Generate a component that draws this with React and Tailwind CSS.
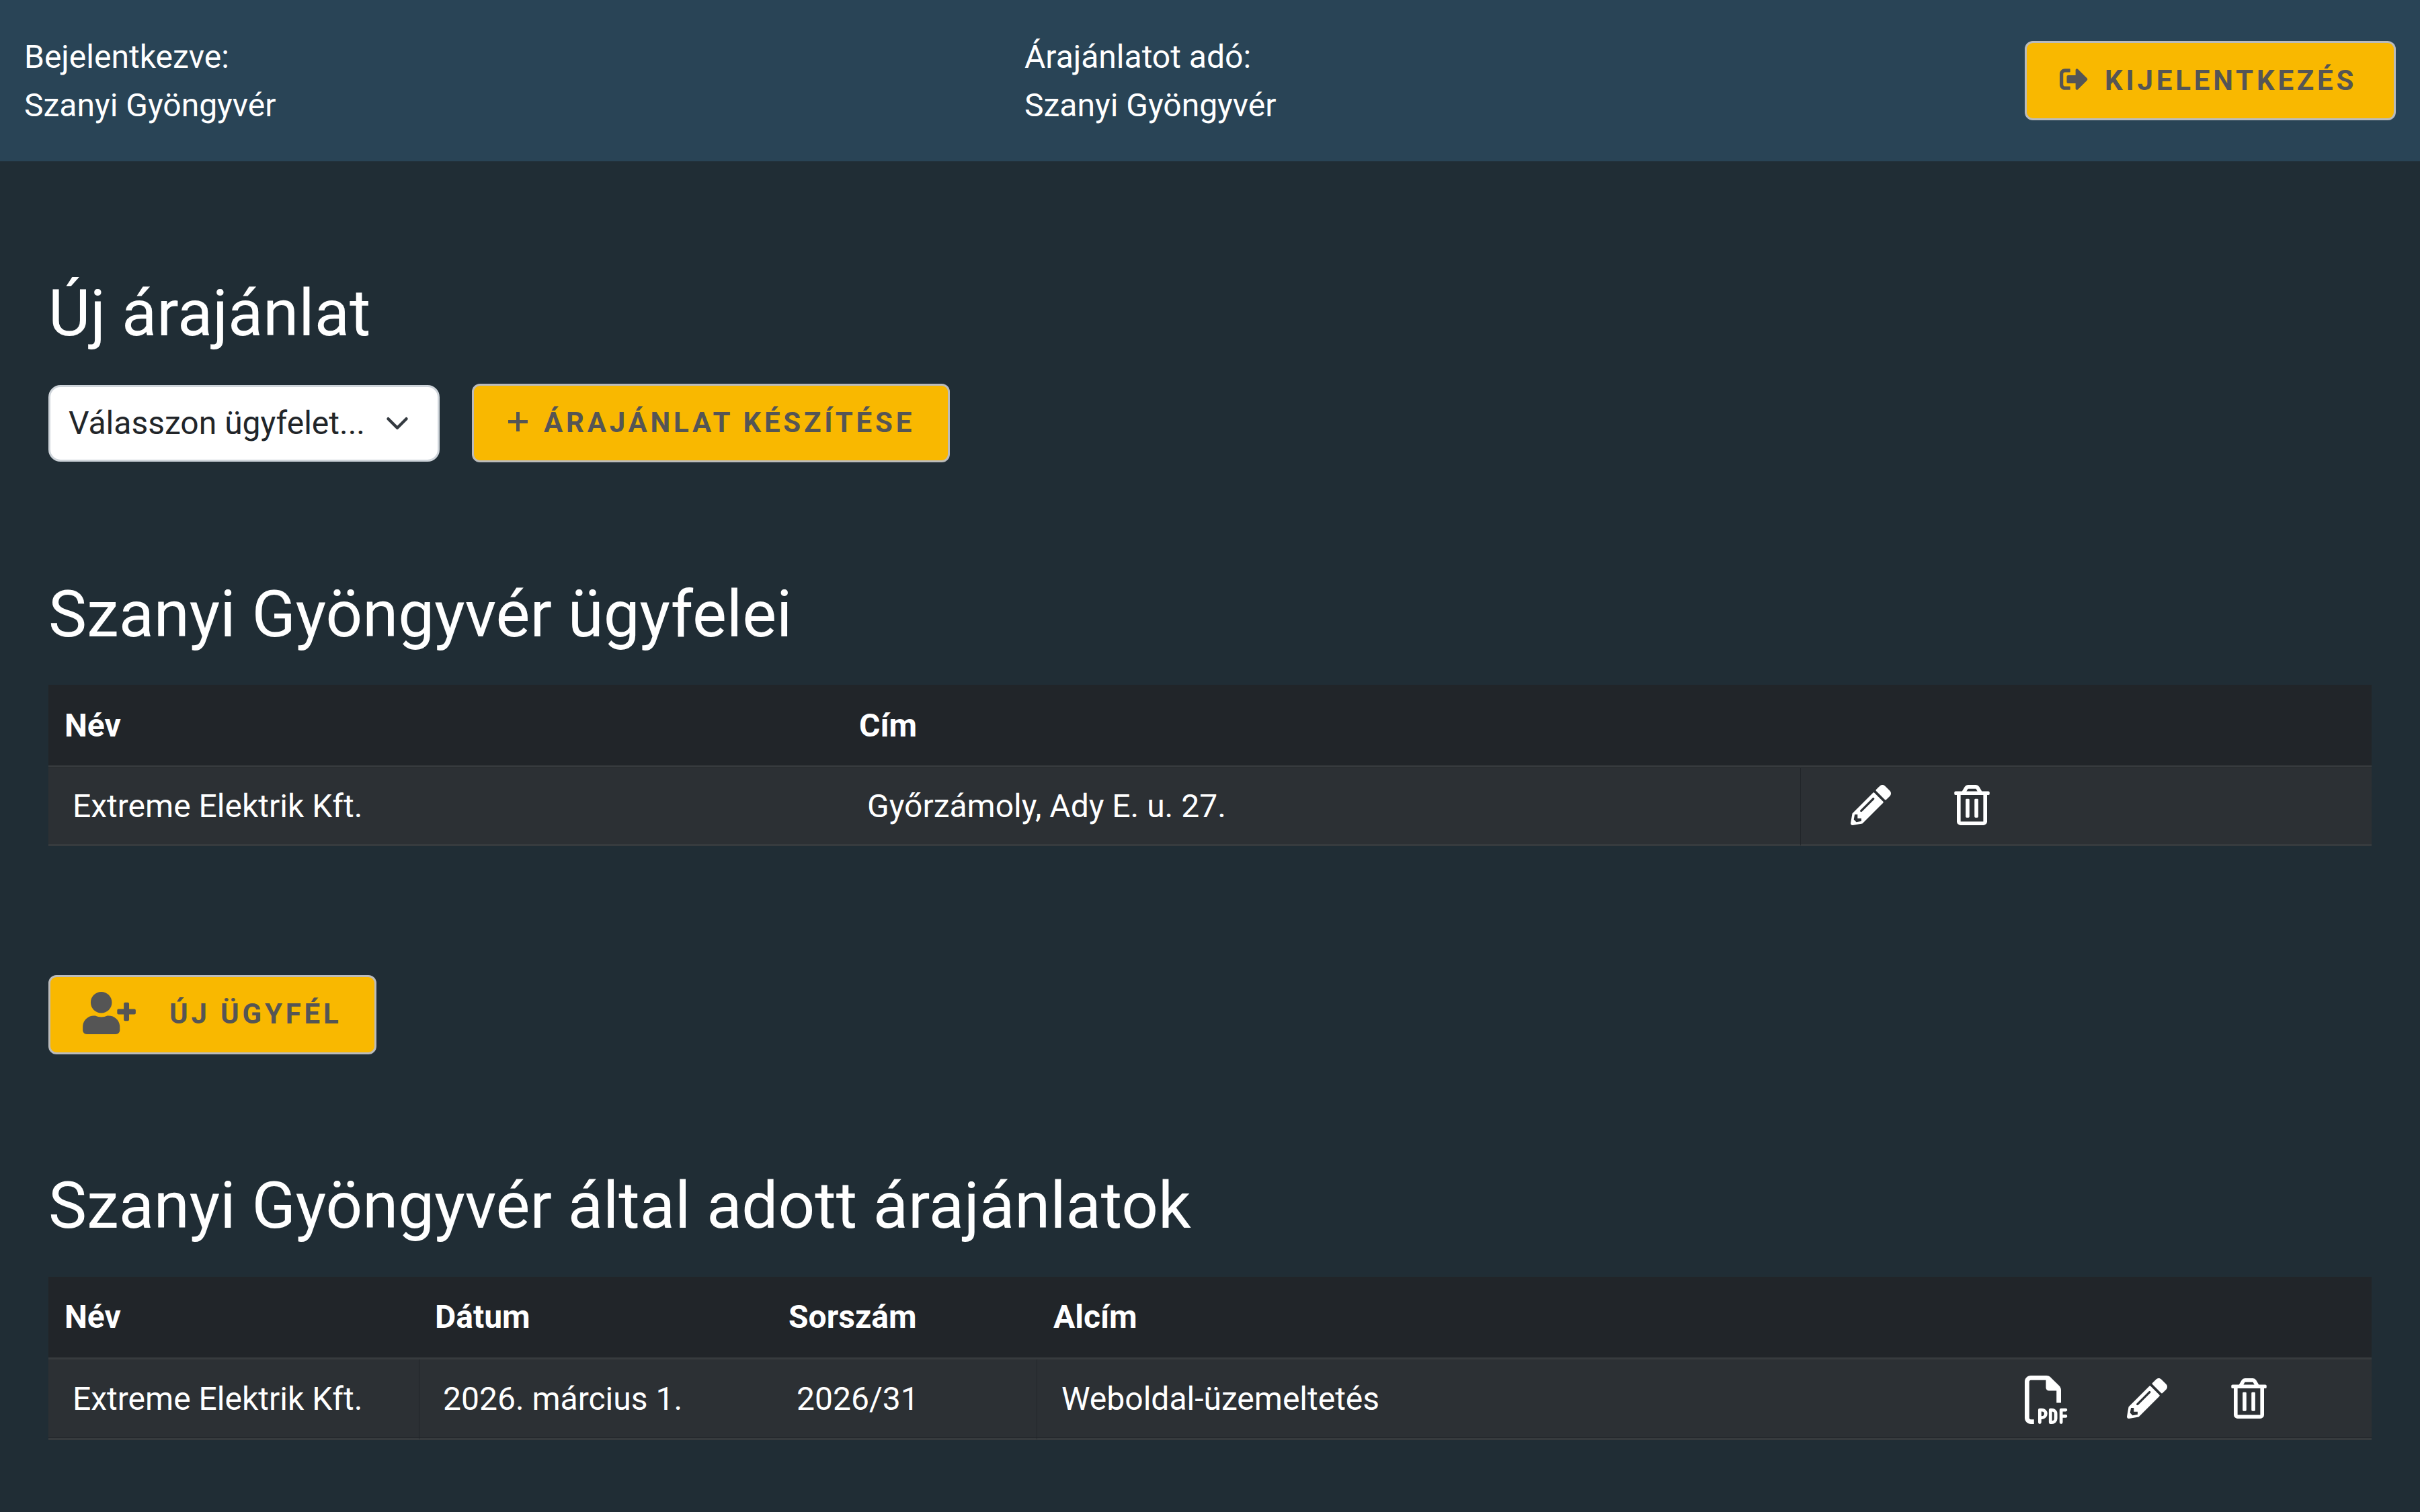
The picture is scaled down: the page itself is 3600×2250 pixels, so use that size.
import React from "react";
import {
  FaPencilAlt,
  FaRegTrashAlt,
  FaSignOutAlt,
  FaUserPlus,
} from "react-icons/fa";

const user = "Szanyi Gyöngyvér";

const clients = [{ name: "Extreme Elektrik Kft.", address: "Győrzámoly, Ady E. u. 27." }];

const offers = [
  {
    name: "Extreme Elektrik Kft.",
    date: "2026. március 1.",
    serial: "2026/31",
    subtitle: "Weboldal-üzemeltetés",
  },
];

const Button = ({ className = "", children }) => (
  <button
    type="button"
    className={`flex shrink-0 items-center rounded-[12px] border-[3px] border-[#bbb] bg-[#f9b800] pl-[48px] text-[42px] leading-[63px] font-bold tracking-[4.8px] whitespace-nowrap text-[#555] uppercase ${className}`}
  >
    {children}
  </button>
);

const PlusIcon = () => (
  <svg className="-mt-[2px] ml-[3px] h-[29px] w-[29px]" viewBox="0 0 29 29">
    <path d="M0 14.5h29M14.5 0v29" stroke="currentColor" strokeWidth="5" />
  </svg>
);

const PdfIcon = ({ className = "" }) => (
  <svg className={className} viewBox="0 0 512 512" fill="currentColor">
    <path d="M64 464h34v48H64c-35.3 0-64-28.7-64-64V64C0 28.7 28.7 0 64 0h165.5c17 0 33.3 6.7 45.3 18.7l90.5 90.5c12 12 18.7 28.3 18.7 45.3V288h-48V160h-80c-17.7 0-32-14.3-32-32V48H64c-8.8 0-16 7.2-16 16v384c0 8.8 7.2 16 16 16z" />
    <g
      fill="none"
      stroke="currentColor"
      strokeWidth="34"
      strokeLinecap="round"
      strokeLinejoin="round"
    >
      <path d="M159 495V363h23a41 41 0 0 1 0 82h-23" />
      <path d="M272 363v132h16a40 40 0 0 0 40-40v-52a40 40 0 0 0-40-40z" />
      <path d="M433 363h-48v132M385 430h48" />
    </g>
  </svg>
);

const Heading = ({ children }) => (
  <h1 className="h-[115px] pt-px text-[96px] leading-[115px] whitespace-nowrap">
    {children}
  </h1>
);

const Th = ({ className = "px-[24px]", children }) => (
  <th
    className={`h-[123px] border-b-[3px] border-[#373b3e] text-left font-bold ${className}`}
  >
    {children}
  </th>
);

const Td = ({ className = "", children }) => (
  <td className={`border-b-[3px] border-b-[#373b3e] bg-[#2c3034] ${className}`}>
    {children}
  </td>
);

const App = () => {
  return (
    <div className="min-h-[2250px] w-[3600px] bg-[#202d35] font-['Roboto',sans-serif] text-[48px] leading-[72px] text-white">
      {/* Top bar */}
      <header className="flex h-[240px] items-center bg-[#294456] px-[36px]">
        <div className="w-[1488px] pt-[2px]">
          <p>Bejelentkezve:</p>
          <p>{user}</p>
        </div>
        <div className="pt-[2px]">
          <p>Árajánlatot adó:</p>
          <p>{user}</p>
        </div>
        <Button className="ml-auto h-[118px] w-[552px] pb-px">
          <FaSignOutAlt className="-mt-[3px] mr-[25px] ml-px" />
          Kijelentkezés
        </Button>
      </header>

      <main className="px-[72px] pt-[168px]">
        {/* New offer */}
        <Heading>Új árajánlat</Heading>
        <div className="mt-[48px] flex items-center gap-[48px]">
          <div className="mt-px flex h-[114px] w-[582px] items-center justify-between rounded-[18px] border-[3px] border-[#ced4da] bg-white pr-[42px] pl-[27px] text-[#212529]">
            <span>Válasszon ügyfelet...</span>
            <svg className="h-[36px] w-[36px]" viewBox="0 0 16 16" fill="none">
              <path
                d="m2 5 6 6 6-6"
                stroke="#343a40"
                strokeLinecap="round"
                strokeLinejoin="round"
                strokeWidth="2"
              />
            </svg>
          </div>
          <Button className="h-[117px] w-[711px] pb-[2px]">
            <PlusIcon />
            <span className="ml-[24px]">Árajánlat készítése</span>
          </Button>
        </div>

        {/* Clients */}
        <section className="mt-[168px]">
          <Heading>{user} ügyfelei</Heading>
          <table className="mt-[48px] w-[3456px] table-fixed border-separate border-spacing-0 bg-[#212529]">
            <colgroup>
              <col className="w-[1182px]" />
              <col className="w-[1424px]" />
              <col className="w-[850px]" />
            </colgroup>
            <thead>
              <tr>
                <Th className="px-[24px] pt-[2px]">Név</Th>
                <Th className="px-[24px] pt-[2px]">Cím</Th>
                <Th />
              </tr>
            </thead>
            <tbody>
              {clients.map((c) => (
                <tr key={c.name}>
                  <Td className="h-[117px] pt-[2px] pl-[36px] shadow-[inset_0_1px_#212529]">
                    {c.name}
                  </Td>
                  <Td className="pt-[2px] pl-[36px] shadow-[inset_0_1px_#212529]">
                    {c.address}
                  </Td>
                  <Td className="border-l border-l-[#212529] shadow-[inset_0_1px_#212529]">
                    <div className="-mt-[3px] ml-[74px] flex items-center gap-[94px] text-[60px]">
                      <FaPencilAlt />
                      <FaRegTrashAlt className="w-[53px]" />
                    </div>
                  </Td>
                </tr>
              ))}
            </tbody>
          </table>
        </section>

        <Button className="mt-[192px] h-[118px] w-[488px] pb-[3px]">
          <FaUserPlus className="-mt-[3px] h-[63px] w-[79px]" />
          <span className="ml-[50px]">Új ügyfél</span>
        </Button>

        {/* Offers */}
        <section className="mt-[167px]">
          <Heading>{user} által adott árajánlatok</Heading>
          <table className="mt-[49px] w-[3456px] table-fixed border-separate border-spacing-0 bg-[#212529]">
            <colgroup>
              <col className="w-[551px]" />
              <col className="w-[526px]" />
              <col className="w-[393px]" />
              <col className="w-[1434px]" />
              <col className="w-[552px]" />
            </colgroup>
            <thead>
              <tr>
                <Th>Név</Th>
                <Th>Dátum</Th>
                <Th>Sorszám</Th>
                <Th className="pl-[25px]">Alcím</Th>
                <Th />
              </tr>
            </thead>
            <tbody>
              {offers.map((o) => (
                <tr key={o.serial}>
                  <Td className="h-[120px] pl-[36px] shadow-[inset_0_-1px_#212529]">
                    {o.name}
                  </Td>
                  <Td className="border-l border-l-[#212529] pl-[35px] shadow-[inset_0_-1px_#212529]">
                    {o.date}
                  </Td>
                  <Td className="pl-[36px] shadow-[inset_0_-1px_#212529]">{o.serial}</Td>
                  <Td className="border-l border-l-[#212529] pl-[36px] shadow-[inset_0_-1px_#212529]">
                    {o.subtitle}
                  </Td>
                  <Td className="pl-[36px] shadow-[inset_0_-1px_#212529]">
                    <div className="flex items-center text-[60px]">
                      <PdfIcon className="mt-[2px] h-[72px] w-[72px]" />
                      <FaPencilAlt className="-mt-[2px] ml-[80px]" />
                      <FaRegTrashAlt className="-mt-[2px] ml-[95px] w-[53px]" />
                    </div>
                  </Td>
                </tr>
              ))}
            </tbody>
          </table>
        </section>
      </main>
    </div>
  );
};

export default App;
